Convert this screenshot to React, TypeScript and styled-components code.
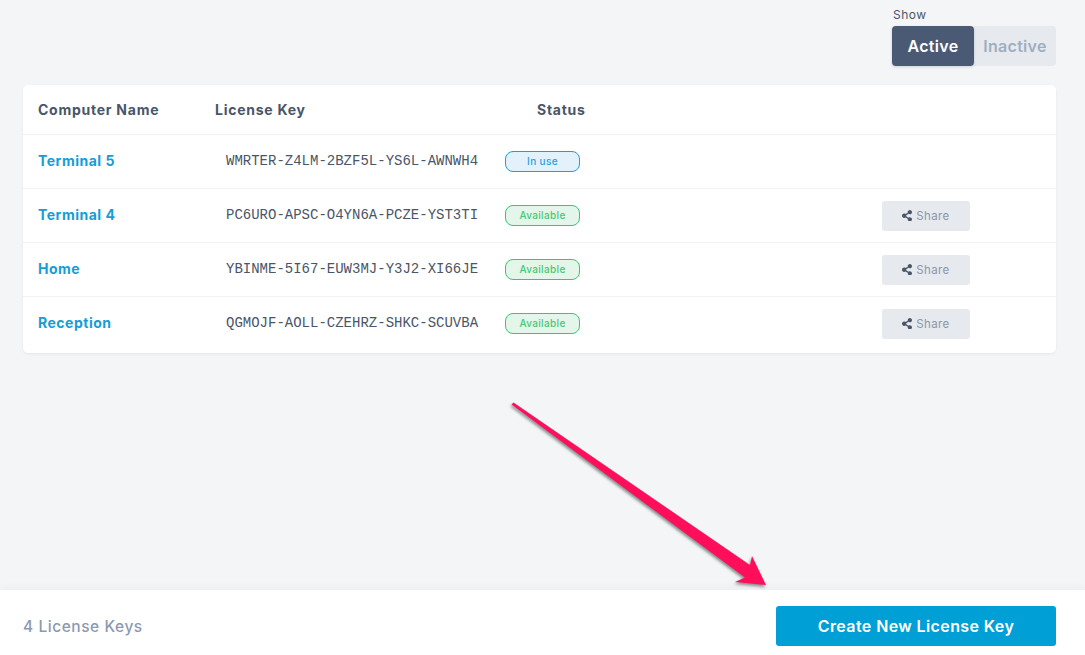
import React from 'react';
import styled, { createGlobalStyle } from 'styled-components';
import { FaShareAlt } from 'react-icons/fa';

const KEYS = [
  { name: 'Terminal 5', key: 'WMRTER-Z4LM-2BZF5L-YS6L-AWNWH4', status: 'In use' },
  { name: 'Terminal 4', key: 'PC6URO-APSC-O4YN6A-PCZE-YST3TI', status: 'Available' },
  { name: 'Home', key: 'YBINME-5I67-EUW3MJ-Y3J2-XI66JE', status: 'Available' },
  { name: 'Reception', key: 'QGMOJF-AOLL-CZEHRZ-SHKC-SCUVBA', status: 'Available' },
];

const GlobalStyle = createGlobalStyle`
  html, body {
    margin: 0;
    padding: 0;
    height: 100%;
    overflow: hidden;
  }
  body {
    font-family: "Inter", "Liberation Sans", sans-serif;
    background: #f4f5f7;
  }
  * {
    box-sizing: border-box;
  }
`;

const Page = styled.div`
  position: relative;
  height: 100vh;
  display: flex;
  flex-direction: column;
  overflow: hidden;
`;

const Main = styled.main`
  flex: 1;
  padding: 9px 29px 0 23px;
`;

const Filter = styled.div`
  display: flex;
  flex-direction: column;
  align-items: flex-start;
  width: 164px;
  margin-left: auto;
  margin-bottom: 19px;
`;

const FilterLabel = styled.span`
  font-size: 12px;
  line-height: 12px;
  letter-spacing: 0.5px;
  color: #4a5568;
  margin: 0 0 5px 1px;
`;

const Toggle = styled.div`
  display: flex;
  width: 164px;
  height: 40px;
  background: #e6e9ee;
  border-radius: 4px;
`;

const ToggleOption = styled.button<{ $active?: boolean }>`
  flex: 1;
  border: none;
  border-radius: 4px;
  padding: 0;
  font-family: inherit;
  font-size: 16px;
  font-weight: 600;
  letter-spacing: 0.3px;
  color: ${p => (p.$active ? '#ffffff' : '#a0aec0')};
  background: ${p => (p.$active ? '#4a5a75' : 'transparent')};
  box-shadow: ${p => (p.$active ? '0 1px 3px rgba(0,0,0,0.15)' : 'none')};
`;

const Card = styled.section`
  background: #ffffff;
  border-radius: 5px;
  padding-bottom: 2px;
  box-shadow: 0 1px 3px rgba(0, 0, 0, 0.06);
`;

const Row = styled.div<{ $head?: boolean }>`
  display: grid;
  grid-template-columns: 177px 290px 1fr 88px;
  align-items: center;
  height: ${p => (p.$head ? '50px' : '54px')};
  padding: 0 86px 0 15px;
  border-bottom: 1px solid #f1f2f4;

  &:last-child {
    border-bottom-color: transparent;
  }
`;

const HeadCell = styled.div<{ $indent?: number }>`
  font-size: 14px;
  font-weight: 700;
  letter-spacing: 0.75px;
  color: #4a5568;
  padding-left: ${p => p.$indent || 0}px;
`;

const NameLink = styled.a`
  font-size: 14px;
  font-weight: 700;
  letter-spacing: 0.5px;
  color: #149dd6;
  text-decoration: none;
  margin-bottom: 2px;
`;

const KeyText = styled.span`
  font-family: "Liberation Mono", monospace;
  font-size: 14px;
  color: #4a5568;
  padding-left: 11px;
  white-space: nowrap;
  margin-bottom: 1px;
`;

const Badge = styled.span<{ $inUse?: boolean }>`
  display: flex;
  align-items: center;
  justify-content: center;
  width: 75px;
  height: 21px;
  padding-bottom: 1px;
  border-radius: 8px;
  font-size: 10px;
  font-weight: 500;
  letter-spacing: 0.35px;
  border: 1px solid ${p => (p.$inUse ? '#0ea5e0' : '#2ecc71')};
  background: ${p => (p.$inUse ? '#e3f2fa' : '#e4f5ea')};
  color: ${p => (p.$inUse ? '#2a9fd6' : '#48c774')};
`;

const ShareButton = styled.button`
  display: flex;
  align-items: center;
  justify-content: center;
  gap: 4px;
  width: 88px;
  height: 30px;
  border: none;
  border-radius: 3px;
  background: #e6e9ee;
  padding: 0;
  font-family: inherit;
  font-size: 11.5px;
  letter-spacing: 0.4px;
  color: #8a97ad;

  svg {
    width: 10px;
    height: 11.5px;
    color: #4a5568;
  }
`;

const Footer = styled.footer`
  display: flex;
  align-items: center;
  justify-content: space-between;
  height: 65px;
  padding: 7px 29px 0 23px;
  background: #ffffff;
  box-shadow: 0 -3px 8px rgba(0, 0, 0, 0.03);
`;

const Count = styled.span`
  font-size: 15.5px;
  font-weight: 500;
  letter-spacing: 0.55px;
  color: #8c99b0;
`;

const CreateButton = styled.button`
  width: 280px;
  height: 40px;
  border: none;
  border-radius: 3px;
  background: #009fd6;
  font-family: inherit;
  font-size: 16px;
  font-weight: 600;
  letter-spacing: 0.4px;
  color: #ffffff;
`;

const ArrowOverlay = styled.svg`
  position: absolute;
  left: 0;
  top: 0;
  width: 1085px;
  height: 655px;
  pointer-events: none;
  filter: drop-shadow(-1px 2px 1.5px rgba(40, 50, 50, 0.55));
`;

export default function App() {
  return (
    <Page>
      <GlobalStyle />
      <Main>
        <Filter>
          <FilterLabel>Show</FilterLabel>
          <Toggle>
            <ToggleOption $active>Active</ToggleOption>
            <ToggleOption>Inactive</ToggleOption>
          </Toggle>
        </Filter>
        <Card>
          <Row $head>
            <HeadCell>Computer Name</HeadCell>
            <HeadCell>License Key</HeadCell>
            <HeadCell $indent={32}>Status</HeadCell>
            <span />
          </Row>
          {KEYS.map(item => (
            <Row key={item.key}>
              <NameLink href="#">{item.name}</NameLink>
              <KeyText>{item.key}</KeyText>
              <Badge $inUse={item.status === 'In use'}>{item.status}</Badge>
              {item.status === 'Available' ? (
                <ShareButton>
                  <FaShareAlt />
                  Share
                </ShareButton>
              ) : (
                <span />
              )}
            </Row>
          ))}
        </Card>
      </Main>
      <Footer>
        <Count>4 License Keys</Count>
        <CreateButton>Create New License Key</CreateButton>
      </Footer>
      <ArrowOverlay viewBox="0 0 1085 655">
        <path
          d="M511.5 404.5 L513.5 402.5 L750 565 L752 556 L766 585 L735 582 L745 577.5 Z"
          fill="#ff0f5b"
        />
      </ArrowOverlay>
    </Page>
  );
}
